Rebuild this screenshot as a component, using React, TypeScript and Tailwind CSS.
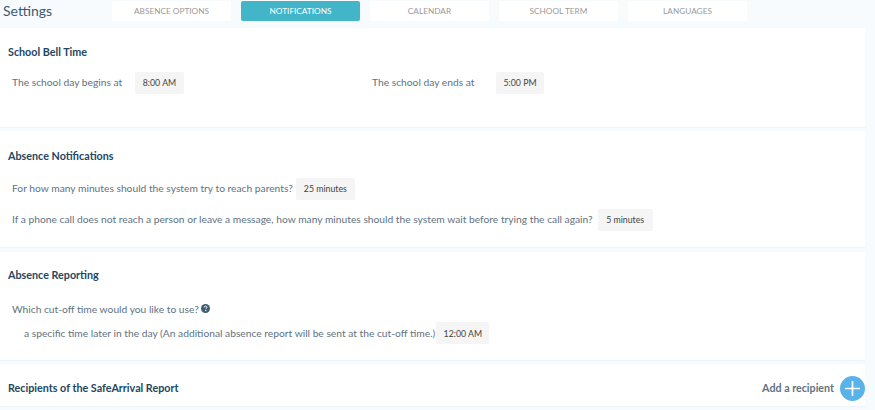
import React from "react";
import { Plus } from "lucide-react";

const TABS = ["ABSENCE OPTIONS", "NOTIFICATIONS", "CALENDAR", "SCHOOL TERM", "LANGUAGES"];

function Value({ children, className = "" }: { children: React.ReactNode; className?: string }) {
  return (
    <span className={`inline-flex h-[22px] shrink-0 items-center justify-center rounded-[2px] bg-[#f5f5f5] text-[8.75px] text-[#444] ${className}`}>
      {children}
    </span>
  );
}

function Heading({ children }: { children: React.ReactNode }) {
  return <h2 className="text-[10.75px] font-bold leading-4 text-[#24465f]">{children}</h2>;
}

export default function App() {
  return (
    <div className="flex h-[410px] w-[875px] flex-col overflow-hidden whitespace-nowrap bg-[#f8fbfe] font-['Lato',sans-serif] text-[10.25px] text-[#5f7282]">
      {/* Header */}
      <div className="flex h-[28px] shrink-0 items-start pt-px">
        <div className="w-[112px] pl-[3px] text-[14px] leading-[20px] text-[#3f5a6e]">Settings</div>
        <div className="flex gap-[10px]">
          {TABS.map((tab) => (
            <div
              key={tab}
              className={`flex h-[20px] w-[119px] items-center justify-center rounded-[2px] text-[8.25px] ${
                tab === "NOTIFICATIONS" ? "bg-[#43b5c8] text-white" : "bg-white text-[#9a9a9a]"
              }`}
            >
              {tab}
            </div>
          ))}
        </div>
      </div>

      <div className="flex w-[865px] flex-col">
        {/* School Bell Time */}
        <section className="h-[100px] border-b border-[#eef5fa] bg-white pl-[8px] pt-[16px]">
          <Heading>School Bell Time</Heading>
          <div className="mt-[12px] flex items-center pl-[4px]">
            <span className="w-[123px]">The school day begins at</span>
            <Value className="w-[49px]">8:00 AM</Value>
            <span className="ml-[188px] w-[124px]">The school day ends at</span>
            <Value className="w-[48px]">5:00 PM</Value>
          </div>
        </section>

        {/* Absence Notifications */}
        <section className="mt-[3px] h-[117px] border-b border-[#eef5fa] bg-white pl-[8px] pt-[17px]">
          <Heading>Absence Notifications</Heading>
          <div className="mt-[14px] flex items-center pl-[4px]">
            <span>For how many minutes should the system try to reach parents?</span>
            <Value className="ml-[3px] w-[59px]">25 minutes</Value>
          </div>
          <div className="mt-[9px] flex items-center pl-[4px]">
            <span>If a phone call does not reach a person or leave a message, how many minutes should the system wait before trying the call again?</span>
            <Value className="ml-[5px] w-[55px]">5 minutes</Value>
          </div>
        </section>

        {/* Absence Reporting */}
        <section className="mt-[4px] h-[109px] border-b border-[#eef5fa] bg-white pl-[8px] pt-[15px]">
          <Heading>Absence Reporting</Heading>
          <div className="mt-[19px] flex items-center gap-[2px] pl-[4px]">
            <span>Which cut-off time would you like to use?</span>
            <svg width="9" height="9" viewBox="0 0 24 24" className="mb-[2px]">
              <circle cx="12" cy="12" r="12" fill="#3f5f75" />
              <path d="M8.2 9.2c.2-2.2 1.8-3.4 3.9-3.4 2.2 0 3.8 1.3 3.8 3.1 0 2.7-3.2 2.7-3.2 5" fill="none" stroke="#fff" strokeWidth="2.6" />
              <rect x="11.2" y="16" width="3" height="3" fill="#fff" />
            </svg>
          </div>
          <div className="mt-[5px] flex items-center pl-[16px]">
            <span>a specific time later in the day (An additional absence report will be sent at the cut-off time.)</span>
            <Value className="ml-[1px] w-[53px]">12:00 AM</Value>
          </div>
        </section>

        {/* Recipients */}
        <section className="mt-[4px] flex h-[42px] items-start justify-between border-b border-[#eef5fa] bg-white pl-[8px] pt-[15px]">
          <Heading>Recipients of the SafeArrival Report</Heading>
          <div className="-mt-[4px] flex items-center gap-[6px]">
            <span className="text-[10.7px] font-bold text-[#5f7282]">Add a recipient</span>
            <span className="flex size-[25px] items-center justify-center rounded-full bg-[#5ab3e8]">
              <Plus size={23} strokeWidth={1.75} className="text-white" />
            </span>
          </div>
        </section>
      </div>
    </div>
  );
}
